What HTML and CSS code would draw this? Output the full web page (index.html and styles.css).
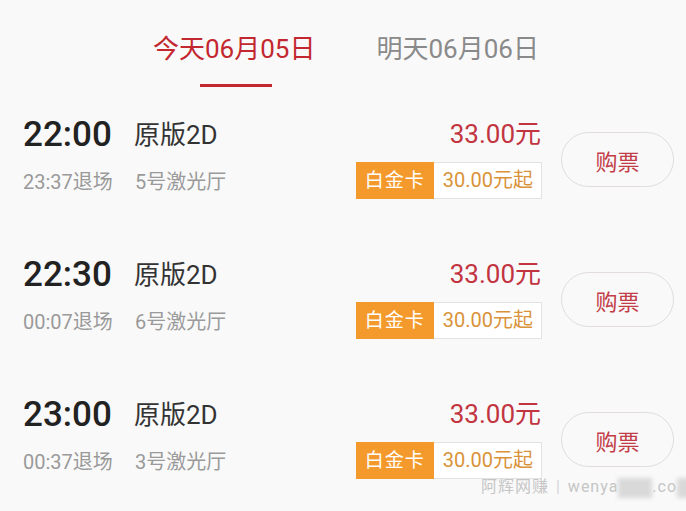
FILE: index.html
```html
<!DOCTYPE html>
<html lang="zh">
<head>
  <meta charset="UTF-8">
  <title>选择场次</title>
  <link rel="stylesheet" href="styles.css">
</head>
<body>

  <div class="tabs">
    <div class="tab active">
      <span class="tab-label">今天06月05日</span>
      <span class="tab-line"></span>
    </div>
    <div class="tab">
      <span class="tab-label">明天06月06日</span>
    </div>
  </div>

  <div class="shows">
    <div class="show">
      <div class="info">
        <span class="start">22:00</span>
        <span class="version">原版2D</span>
        <span class="end">23:37退场</span>
        <span class="hall">5号激光厅</span>
      </div>
      <div class="prices">
        <div class="price">33.00元</div>
        <div class="card"><span class="card-name">白金卡</span><span class="card-price">30.00元起</span></div>
      </div>
      <button class="buy">购票</button>
    </div>

    <div class="show">
      <div class="info">
        <span class="start">22:30</span>
        <span class="version">原版2D</span>
        <span class="end">00:07退场</span>
        <span class="hall">6号激光厅</span>
      </div>
      <div class="prices">
        <div class="price">33.00元</div>
        <div class="card"><span class="card-name">白金卡</span><span class="card-price">30.00元起</span></div>
      </div>
      <button class="buy">购票</button>
    </div>

    <div class="show">
      <div class="info">
        <span class="start">23:00</span>
        <span class="version">原版2D</span>
        <span class="end">00:37退场</span>
        <span class="hall">3号激光厅</span>
      </div>
      <div class="prices">
        <div class="price">33.00元</div>
        <div class="card"><span class="card-name">白金卡</span><span class="card-price">30.00元起</span></div>
      </div>
      <button class="buy">购票</button>
    </div>
  </div>

  <div class="mark">阿辉网赚 <span class="bar">|</span> wenya<span class="smudge"></span>.co<span class="smudge short"></span></div>

</body>
</html>
```

FILE: styles.css
```css
body {
  margin: 0;
  background: #f9f9f9;
  font-family: Roboto, "Noto Sans CJK SC", sans-serif;
  color: #333;
  position: relative;
  height: 511px;
  overflow: hidden;
}

/* 日期切换 */
.tabs {
  display: flex;
  padding-left: 153px;
  gap: 61px;
  height: 90px;
}

.tab {
  display: flex;
  flex-direction: column;
  align-items: center;
  padding-top: 34px;
}

.tab-label {
  font-size: 26px;
  line-height: 30px;
  color: #8a8a8a;
  white-space: nowrap;
}

.tab.active .tab-label {
  color: #c3272f;
}

.tab-line {
  display: block;
  width: 72px;
  height: 3px;
  margin-top: 20px;
  margin-left: 3px;
  background: #c3272f;
}

/* 场次列表 */
.show {
  display: flex;
  align-items: flex-start;
  height: 140px;
  box-sizing: border-box;
  padding: 25px 12px 0 23px;
}

.info {
  flex: 1;
  display: grid;
  grid-template-columns: 111px auto;
  row-gap: 15px;
  align-items: center;
}

.start {
  font-size: 35px;
  font-weight: 500;
  line-height: 40px;
  color: #222;
}

.version {
  font-size: 26px;
  line-height: 40px;
  color: #333;
}

.end, .hall {
  font-size: 20px;
  line-height: 24px;
  color: #9a9a9a;
}

.hall {
  padding-left: 1px;
}

.prices {
  display: flex;
  flex-direction: column;
  align-items: flex-end;
  margin-top: 3px;
}

.price {
  font-size: 26px;
  line-height: 32px;
  color: #c2343f;
}

.card {
  display: flex;
  height: 37px;
  margin-top: 12px;
  margin-right: -1px;
}

.card-name {
  width: 78px;
  background: #f49a2c;
  color: #fff;
  font-size: 19px;
  letter-spacing: 1px;
  line-height: 37px;
  text-align: center;
}

.card-price {
  border: 1px solid #e2e2e2;
  border-left: none;
  background: #fff;
  color: #d9933a;
  font-size: 20px;
  line-height: 35px;
  padding: 0 8px 0 9px;
}

.buy {
  align-self: center;
  margin: -26px 0 0 20px;
  width: 113px;
  height: 55px;
  border: 1px solid #e2dcdc;
  border-radius: 28px;
  background: transparent;
  color: #c23d47;
  font-family: inherit;
  font-size: 22px;
  cursor: pointer;
}

/* 底部水印 */
.mark {
  position: absolute;
  left: 481px;
  top: 476px;
  font-size: 16px;
  line-height: 22px;
  color: #c6c6c6;
  letter-spacing: 1px;
  white-space: nowrap;
}

.mark .bar {
  color: #d6d6d6;
  margin: 0 2px;
}

.smudge {
  display: inline-block;
  width: 34px;
  height: 20px;
  vertical-align: middle;
  background: #d9d9d9;
  filter: blur(2px);
}

.smudge.short {
  width: 16px;
}
```
